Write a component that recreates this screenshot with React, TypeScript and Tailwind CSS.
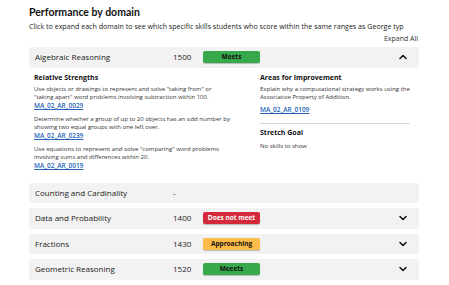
import React, { useState } from 'react';
import clsx from 'clsx';
import { ChevronDown, ChevronUp } from 'lucide-react';

type Level = 'meets' | 'not' | 'approaching' | null;

interface Domain {
  name: string;
  score: string;
  level: Level;
  label?: string;
}

const domains: Domain[] = [
  { name: 'Algebraic Reasoning', score: '1500', level: 'meets', label: 'Meets' },
  { name: 'Counting and Cardinality', score: '-', level: null },
  { name: 'Data and Probability', score: '1400', level: 'not', label: 'Does not meet' },
  { name: 'Fractions', score: '1430', level: 'approaching', label: 'Approaching' },
  { name: 'Geometric Reasoning', score: '1520', level: 'meets', label: 'Meeets' },
];

const strengths = [
  {
    text: 'Use objects or drawings to represent and solve "taking from" or "taking apart" word problems involving subtraction within 100.',
    code: 'MA_02_AR_0029',
  },
  {
    text: 'Determine whether a group of up to 20 objects has an odd number by showing two equal groups with one left over.',
    code: 'MA_02_AR_0239',
  },
  {
    text: 'Use equations to represent and solve "comparing" word problems involving sums and differences within 20.',
    code: 'MA_02_AR_0019',
  },
];

const Badge = ({ level, label }: { level: Level; label?: string }) => {
  if (!level) return null;
  return (
    <span
      className={clsx(
        'w-[57px] h-[12px] rounded-[2px] flex items-center justify-center text-[6.5px] font-bold shadow-[0_1px_1px_rgba(0,0,0,0.25)]',
        level === 'meets' && 'bg-[#36a94a] text-[#111]',
        level === 'not' && 'bg-[#d3293b] text-white',
        level === 'approaching' && 'bg-[#fdbb4a] text-[#111]'
      )}
    >
      {label}
    </span>
  );
};

const SkillLink = ({ code }: { code: string }) => (
  <a href="#" className="block text-[6.5px] leading-[9px] font-semibold text-[#2563b8] underline">
    {code}
  </a>
);

export default function App() {
  const [open, setOpen] = useState<string | null>('Algebraic Reasoning');

  return (
    <div className="w-[449px] h-[285px] bg-white overflow-hidden pl-[29px] pr-[30px] pt-[6px] text-[#222] font-['Open_Sans',sans-serif]">
      <h2 className="text-[10.5px] leading-[13px] font-bold text-[#111] font-['Lato',sans-serif]">Performance by domain</h2>
      <p className="mt-[3px] text-[7.1px] leading-[9px] whitespace-nowrap">
        Click to expand each domain to see which specific skills students who score within the same ranges as George typ
      </p>
      <div className="flex justify-end mt-[3px] pr-[1px]">
        <button className="text-[7px] leading-[9px] text-[#333]">Expand All</button>
      </div>

      <div className="mt-[4px] flex flex-col gap-[5px]">
        {domains.map((d) => {
          const isOpen = open === d.name;
          return (
            <div key={d.name}>
              <div
                onClick={() => d.level && setOpen(isOpen ? null : d.name)}
                className="h-[20.5px] bg-[#f2f2f2] rounded-[2px] flex items-center pl-[6px] pr-[10px] cursor-pointer"
              >
                <span className="w-[138px] text-[8px] font-medium text-[#1a1a1a]">{d.name}</span>
                <span className="w-[30px] text-[8px] text-[#222]">{d.score}</span>
                <Badge level={d.level} label={d.label} />
                {d.level && (
                  <span className="ml-auto">
                    {isOpen ? (
                      <ChevronUp size={12} strokeWidth={3} color="#111" />
                    ) : (
                      <ChevronDown size={12} strokeWidth={3} color="#111" />
                    )}
                  </span>
                )}
              </div>

              {isOpen && (
                <div className="flex pl-[5px] pt-[5px] pb-[8px]">
                  {/* Relative Strengths */}
                  <div className="w-[197px]">
                    <h4 className="text-[7px] leading-[10px] font-bold text-[#111]">Relative Strengths</h4>
                    <div className="mt-[2px] flex flex-col gap-[5px]">
                      {strengths.map((s) => (
                        <div key={s.code}>
                          <p className="text-[6px] leading-[8px] text-[#333]">{s.text}</p>
                          <SkillLink code={s.code} />
                        </div>
                      ))}
                    </div>
                  </div>

                  {/* Areas / Stretch */}
                  <div className="ml-[29px] w-[150px]">
                    <h4 className="text-[7px] leading-[10px] font-bold text-[#111]">Areas for Improvement</h4>
                    <p className="mt-[2px] text-[6px] leading-[8px] text-[#333]">
                      Explain why a computational strategy works using the Associative Property of Addition.
                    </p>
                    <div className="mt-[4px]">
                      <SkillLink code="MA_02_AR_0109" />
                    </div>
                    <div className="mt-[9px] border-t border-[#d9d9d9]" />
                    <h4 className="mt-[4px] text-[7px] leading-[10px] font-bold text-[#111]">Stretch Goal</h4>
                    <p className="mt-[4px] text-[6px] leading-[8px] text-[#333]">No skills to show</p>
                  </div>
                </div>
              )}
            </div>
          );
        })}
      </div>
    </div>
  );
}
